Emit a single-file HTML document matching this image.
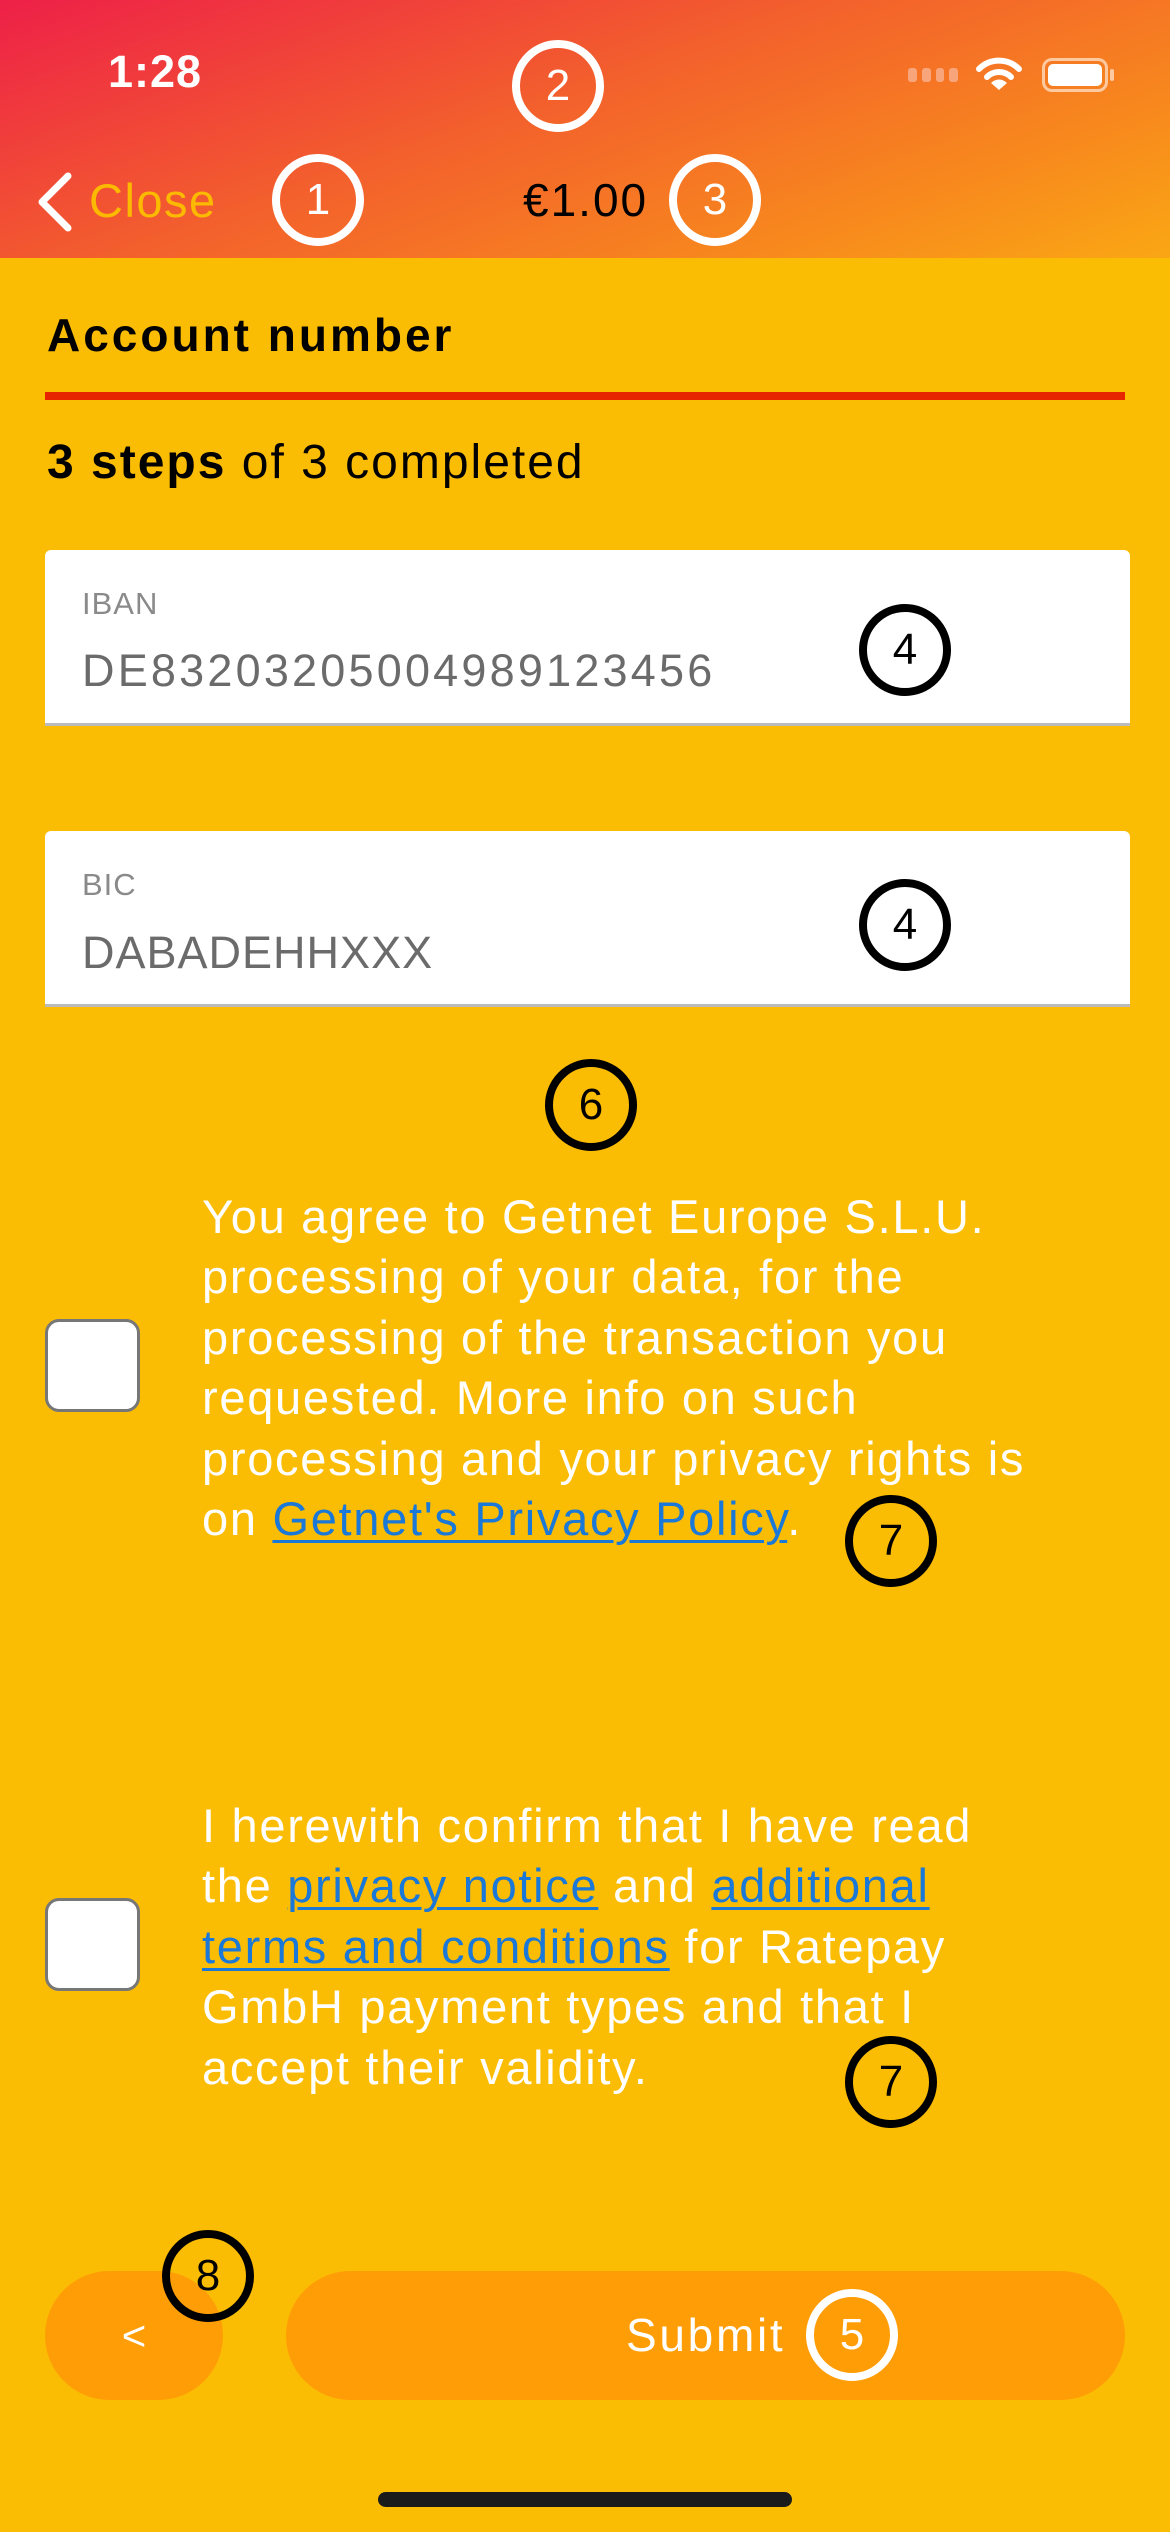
<!DOCTYPE html>
<html><head><meta charset="utf-8"><style>
*{margin:0;padding:0;box-sizing:border-box}
body{width:1170px;height:2532px;background:#FBBC04;position:relative;overflow:hidden;font-family:"Liberation Sans",sans-serif}
.a{position:absolute;white-space:nowrap}
.hdr{position:absolute;left:0;top:0;width:1170px;height:258px;background:linear-gradient(160deg,#EE2048 0%,#F3612C 45%,#F88C1C 80%,#FAA714 100%)}
.c{position:absolute;border-radius:50%;border:8px solid #fff;color:#fff;font-size:44px;display:flex;align-items:center;justify-content:center;width:92px;height:92px}
.k{border-color:#000;color:#000}
.line{position:absolute;left:202px;font-size:47px;letter-spacing:1.7px;color:#fff;white-space:nowrap;line-height:60px}
.lk{color:#1a78d9;text-decoration:underline;text-decoration-thickness:3px;text-underline-offset:5px}
.box{position:absolute;left:45px;width:1085px;background:#fff;border-bottom:3px solid #bbb;border-radius:6px 6px 0 0}
.cb{position:absolute;left:45px;width:95px;height:93px;background:#fff;border:3px solid #777;border-radius:14px}
</style></head><body>
<div class="hdr"></div>
<div class="a" style="left:108px;top:46px;font-size:45px;font-weight:bold;color:#fff;letter-spacing:1px">1:28</div>
<div class="a" style="left:908px;top:68px;width:50px;height:14px;display:flex;gap:5px"><span style="width:9px;height:14px;background:#f9a57c;border-radius:3px"></span><span style="width:9px;height:14px;background:#f9a57c;border-radius:3px"></span><span style="width:9px;height:14px;background:#f9a57c;border-radius:3px"></span><span style="width:9px;height:14px;background:#f9a57c;border-radius:3px"></span></div>
<svg class="a" style="left:976px;top:56px" width="46" height="36" viewBox="0 0 46 36"><path d="M3 13 A28 28 0 0 1 43 13" stroke="#fff" stroke-width="6" fill="none" stroke-linecap="round"/><path d="M11 21 A17 17 0 0 1 35 21" stroke="#fff" stroke-width="6" fill="none" stroke-linecap="round"/><path d="M23 34 L15 27 A11 11 0 0 1 31 27 Z" fill="#fff"/></svg>
<div class="a" style="left:1042px;top:58px;width:66px;height:34px;border:3px solid #fcc9a0;border-radius:10px;padding:3px"><div style="width:100%;height:100%;background:#fff;border-radius:5px"></div></div>
<div class="a" style="left:1110px;top:69px;width:4px;height:12px;background:#fcc9a0;border-radius:2px"></div>
<div class="c" style="left:512px;top:40px">2</div>
<svg class="a" style="left:34px;top:172px" width="40" height="60" viewBox="0 0 40 60"><path d="M34 4 L8 30 L34 56" stroke="#fff" stroke-width="7" fill="none" stroke-linecap="round" stroke-linejoin="round"/></svg>
<div class="a" style="left:89px;top:173px;font-size:47px;color:#FBBA00;letter-spacing:1.5px">Close</div>
<div class="c" style="left:272px;top:154px">1</div>
<div class="a" style="left:523px;top:173px;font-size:46px;color:#000;letter-spacing:2px">€1.00</div>
<div class="c" style="left:669px;top:154px">3</div>
<div class="a" style="left:47px;top:308px;font-size:46px;font-weight:bold;color:#000;letter-spacing:3px">Account number</div>
<div class="a" style="left:45px;top:392px;width:1080px;height:8px;background:#E62400"></div>
<div class="a" style="left:47px;top:435px;font-size:48px;color:#000;letter-spacing:2px"><span style="font-weight:bold">3 steps</span> of 3 completed</div>
<div class="box" style="top:550px;height:176px"></div>
<div class="a" style="left:82px;top:586px;font-size:31px;color:#8a8a8a;letter-spacing:1px">IBAN</div>
<div class="a" style="left:82px;top:645px;font-size:45px;color:#6b6b6b;letter-spacing:3.2px">DE83203205004989123456</div>
<div class="c k" style="left:859px;top:604px">4</div>
<div class="box" style="top:831px;height:176px"></div>
<div class="a" style="left:82px;top:867px;font-size:31px;color:#8a8a8a;letter-spacing:1px">BIC</div>
<div class="a" style="left:82px;top:927px;font-size:45px;color:#6b6b6b;letter-spacing:1px">DABADEHHXXX</div>
<div class="c k" style="left:859px;top:879px">4</div>
<div class="c k" style="left:545px;top:1059px">6</div>
<div class="cb" style="top:1319px"></div>
<div class="line" style="top:1187px">You agree to Getnet Europe S.L.U.</div>
<div class="line" style="top:1247px">processing of your data, for the</div>
<div class="line" style="top:1308px">processing of the transaction you</div>
<div class="line" style="top:1368px">requested. More info on such</div>
<div class="line" style="top:1429px">processing and your privacy rights is</div>
<div class="line" style="top:1489px">on <span class="lk">Getnet's Privacy Policy</span>.</div>
<div class="c k" style="left:845px;top:1495px">7</div>
<div class="cb" style="top:1898px"></div>
<div class="line" style="top:1796px">I herewith confirm that I have read</div>
<div class="line" style="top:1856px">the <span class="lk">privacy notice</span> and <span class="lk">additional</span></div>
<div class="line" style="top:1917px"><span class="lk">terms and conditions</span> for Ratepay</div>
<div class="line" style="top:1977px">GmbH payment types and that I</div>
<div class="line" style="top:2038px">accept their validity.</div>
<div class="c k" style="left:845px;top:2036px">7</div>
<div class="a" style="left:45px;top:2271px;width:178px;height:129px;background:#FF9D06;border-radius:65px;color:#fff;font-size:42px;display:flex;align-items:center;justify-content:center">&lt;</div>
<div class="a" style="left:286px;top:2271px;width:839px;height:129px;background:#FF9D06;border-radius:65px"></div>
<div class="a" style="left:626px;top:2308px;font-size:46px;color:#fff;letter-spacing:2.7px">Submit</div>
<div class="c" style="left:806px;top:2289px">5</div>
<div class="c k" style="left:162px;top:2230px">8</div>
<div class="a" style="left:378px;top:2492px;width:414px;height:15px;background:#1b1b1b;border-radius:8px"></div>
</body></html>
